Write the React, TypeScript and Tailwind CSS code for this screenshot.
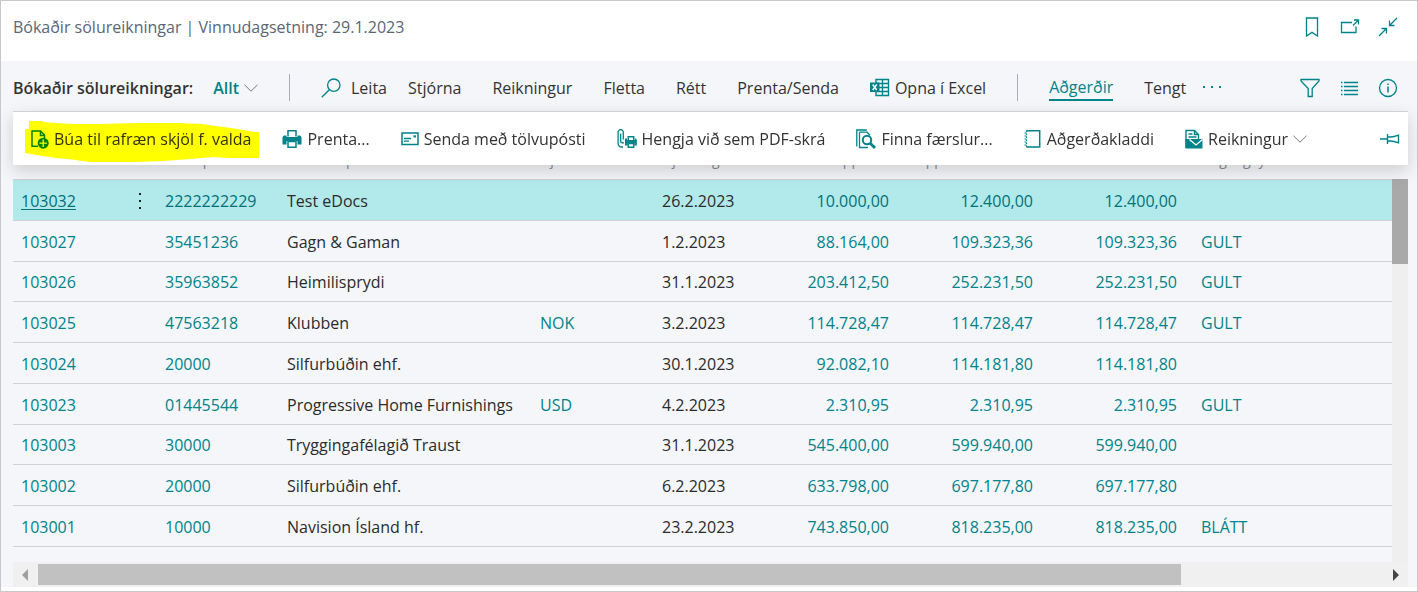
import type { ReactNode } from "react";

const teal = "#00838a";

function Svg({ w = 20, h = 20, children }: { w?: number; h?: number; children: ReactNode }) {
  return (
    <svg
      width={w}
      height={h}
      viewBox={`0 0 ${w} ${h}`}
      fill="none"
      stroke={teal}
      strokeWidth="1.3"
      className="shrink-0"
      aria-hidden="true"
    >
      {children}
    </svg>
  );
}

const BookmarkIcon = () => (
  <Svg>
    <path d="M4.5 1h11v18l-5.5-3.6L4.5 19z" />
  </Svg>
);
const PopOutIcon = () => (
  <Svg>
    <path d="M12 5.5H1.5v10h14.5v-6M13 8.5l5.5-5.5M14 3h4.5v4.5" />
  </Svg>
);
const CollapseIcon = () => (
  <Svg>
    <path d="M19 1l-7.5 7.5M11.5 3.5v5h5M1 19l7.5-7.5M3.5 11.5h5v5" />
  </Svg>
);
const FilterIcon = () => (
  <Svg>
    <path d="M1 1.5h18v1.5l-6.8 7.5v8h-4v-8L1 3z" />
  </Svg>
);
const ListIcon = () => (
  <Svg>
    <path d="M5 4.5h14M5 8.5h14M5 12.5h14M5 16.5h14M2 4.5h1.500M2 8.5h1.5M2 12.5h1.5M2 16.5h1.5" />
  </Svg>
);
const InfoIcon = () => (
  <Svg>
    <circle cx="10" cy="10" r="8.5" />
    <path d="M10 8.5v6M10 5.5v1.5" strokeWidth="1.5" />
  </Svg>
);
const SearchIcon = () => (
  <Svg>
    <circle cx="12.8" cy="7.2" r="6.2" />
    <path d="M8.3 11.7L.8 19.2" />
  </Svg>
);
const ExcelIcon = () => (
  <Svg>
    <path d="M6 1.5h12.5v16H6zM6 5.5h12.5M6 9.5h12.5M6 13.5h12.5M12.5 1.5v16" strokeWidth="1.4" />
    <path d="M0 4.5h9.5v9.5H0z" fill={teal} stroke="none" />
    <path d="M2.7 6.5l4 5.5M6.7 6.5l-4 5.5" stroke="#fff" strokeWidth="1.4" />
  </Svg>
);
const NewDocIcon = () => (
  <Svg w={18}>
    <path d="M7 17.3H1V2h8.5l4 4v3.5M9.5 2v4.5h4" strokeWidth="1.5" />
    <circle cx="12.2" cy="14.2" r="5.5" fill={teal} stroke="none" />
    <path d="M12.2 10.5v7.4M8.5 14.2h7.4" stroke="#fff" strokeWidth="1.3" />
  </Svg>
);
const PrinterIcon = () => (
  <Svg>
    <path d="M6 7.5V1.8h8v5.7" strokeWidth="1.5" />
    <path d="M2 6.5h2.5v1.5h11V6.5H18l1.5 1.5v7.5h-4v-3.5h-11v3.5H.5V8z" fill={teal} stroke="none" />
    <path d="M6 12.5h8v5.7H6z" fill="#fff" strokeWidth="1.5" />
  </Svg>
);
const MailIcon = () => (
  <Svg w={18}>
    <path d="M1 4h16v11.5H1z" strokeWidth="1.5" />
    <path d="M3 9.5h7M3 12.2h5" />
    <path d="M12.5 6.3h2.5v2.200h-2.5z" fill={teal} stroke="none" />
  </Svg>
);
const AttachIcon = () => (
  <Svg>
    <path d="M6.3 10.5V3.2a2.6 2.6 0 0 0-5.2 0v11.3a3.5 3.5 0 0 0 3.5 3.5H6M3.7 4.5v7.5c0 2 1.8 1.8 3.3 1.8" />
    <path d="M11.3 11.5V7.7h5.4v3.8" strokeWidth="1.5" />
    <path d="M8 9.5h2v1.5h8V9.5h1l.8 1.5v5.5h-2.5V14h-6.6v2.5H8z" fill={teal} stroke="none" />
    <path d="M11.3 14.5h5.4v3.8h-5.4z" fill="#fff" strokeWidth="1.5" />
  </Svg>
);
const FindIcon = () => (
  <Svg>
    <path d="M.8 17.5V1h10M3.5 3.2h7.5l3 3M3.5 3.2v15.3H12" />
    <circle cx="11" cy="11" r="4.2" strokeWidth="2" />
    <path d="M14 14l5 5" strokeWidth="2.8" />
  </Svg>
);
const NotebookIcon = () => (
  <Svg w={18}>
    <path d="M2.5 1.8h13.2v16.2H2.5" strokeWidth="1.5" />
    <path d="M2.5 1.5v17" strokeWidth="1.3" strokeDasharray="1.5 1.5" />
    <path d="M.5 4h2M.5 7h2M.5 10h2M.5 13h2M.5 16h2" strokeWidth="1.2" />
  </Svg>
);
const InvoiceIcon = () => (
  <Svg w={18}>
    <path d="M1 19V1.5h8.5l4 4V10M9.5 1.5v4h4M3.5 5h4M3.5 8h8" strokeWidth="1.4" />
    <path d="M4.5 10h13v9.5h-13zM.5 10h4v9.5h-4z" fill={teal} stroke="none" />
    <path d="M4.5 10.5l6.500 5.5 6.5-5.5" stroke="#fff" strokeWidth="1.3" />
  </Svg>
);
const PinIcon = () => (
  <Svg>
    <path d="M0 10h7M7.5 5v10M7.5 7.7c4 1 6 .5 11-1.5v7.6c-5-2-7-2.5-11-1.5z" strokeWidth="1.4" />
  </Svg>
);
const Chevron = () => (
  <svg width="14" height="8" viewBox="0 0 14 8" fill="none" stroke="#777" className="shrink-0" aria-hidden="true">
    <path d="M.5 .8L7 7.2 13.5 .8" />
  </svg>
);

function Tool({ icon, children, chevron }: { icon?: ReactNode; children: ReactNode; chevron?: boolean }) {
  return (
    <button className="flex items-center gap-[5px] whitespace-nowrap">
      {icon}
      <span>{children}</span>
      {chevron && <Chevron />}
    </button>
  );
}

type Row = [string, string, string, string, string, string, string, string, string];
const rows: Row[] = [
  ["103032", "2222222229", "Test eDocs", "", "26.2.2023", "10.000,00", "12.400,00", "12.400,00", ""],
  ["103027", "35451236", "Gagn & Gaman", "", "1.2.2023", "88.164,00", "109.323,36", "109.323,36", "GULT"],
  ["103026", "35963852", "Heimilisprydi", "", "31.1.2023", "203.412,50", "252.231,50", "252.231,50", "GULT"],
  ["103025", "47563218", "Klubben", "NOK", "3.2.2023", "114.728,47", "114.728,47", "114.728,47", "GULT"],
  ["103024", "20000", "Silfurbúðin ehf.", "", "30.1.2023", "92.082,10", "114.181,80", "114.181,80", ""],
  ["103023", "01445544", "Progressive Home Furnishings", "USD", "4.2.2023", "2.310,95", "2.310,95", "2.310,95", "GULT"],
  ["103003", "30000", "Tryggingafélagið Traust", "", "31.1.2023", "545.400,00", "599.940,00", "599.940,00", ""],
  ["103002", "20000", "Silfurbúðin ehf.", "", "6.2.2023", "633.798,00", "697.177,80", "697.177,80", ""],
  ["103001", "10000", "Navision Ísland hf.", "", "23.2.2023", "743.850,00", "818.235,00", "818.235,00", "BLÁTT"],
];

export default function App() {
  return (
    <div className="border border-[#c8c8c8] bg-white pb-1 font-['Open_Sans',sans-serif] text-[16px] leading-6 text-[#333]">
      <header className="flex h-[60px] items-center justify-between pr-[19px] pb-2 pl-3 text-[#5b6675]">
        <h1>Bókaðir sölureikningar | Vinnudagsetning: 29.1.2023</h1>
        <div className="flex gap-[18px]">
          <button aria-label="Bókamerki"><BookmarkIcon /></button>
          <button aria-label="Opna í nýjum glugga"><PopOutIcon /></button>
          <button aria-label="Minnka"><CollapseIcon /></button>
        </div>
      </header>

      <main className="bg-[#f5f6f9] pr-[9px] pl-3">
        <nav className="flex h-[50px] items-center gap-[31px] pt-[3px]">
          <div className="flex items-center gap-5 font-semibold whitespace-nowrap">
            <h2>Bókaðir sölureikningar:</h2>
            <button className="flex items-center gap-[5px] text-[#00838a]">
              Allt <Chevron />
            </button>
          </div>
          <span className="h-[27px] w-px shrink-0 bg-[#a9adb3]" />
          <button className="-mr-[10px] flex items-center gap-[10px]">
            <SearchIcon />
            Leita
          </button>
          <Tool>Stjórna</Tool>
          <Tool>Reikningur</Tool>
          <Tool>Fletta</Tool>
          <Tool>Rétt</Tool>
          <Tool>Prenta/Senda</Tool>
          <Tool icon={<ExcelIcon />}>Opna í Excel</Tool>
          <span className="h-[27px] w-px shrink-0 bg-[#a9adb3]" />
          <button className="border-b-2 border-[#00838a] text-[#00838a]">Aðgerðir</button>
          <div className="flex items-center gap-4">
            <Tool>Tengt</Tool>
            <button aria-label="Fleiri valkostir">
              <Svg>
                <path d="M1 9h2M9 9h2M17 9h2" strokeWidth="2" />
              </Svg>
            </button>
          </div>
          <div className="ml-auto flex gap-[19px] pr-[10px]">
            <button aria-label="Sía"><FilterIcon /></button>
            <button aria-label="Listi"><ListIcon /></button>
            <button aria-label="Upplýsingar"><InfoIcon /></button>
          </div>
        </nav>

        <div className="relative z-10 flex h-[54px] items-center gap-[31px] border-t border-[#cfd1d4] bg-white pr-2 pl-[18px] shadow-[0_6px_16px_rgba(0,0,0,0.16)]">
          <div className="relative">
            <Tool icon={<NewDocIcon />}>Búa til rafræn skjöl f. valda</Tool>
            <svg
              className="pointer-events-none absolute -top-[6px] -left-[6px] mix-blend-multiply"
              width="234"
              height="42"
              viewBox="0 0 234 42"
              aria-hidden="true"
            >
              <path
                d="M4 0h14v1l12 1 18 1h28l37-1h40l24 1 14 2 15 2 12 2 12 2h14v26h-40l-16-1-22 2-28 2-27 1H65l-22-3-12-1-20-3-11-2V8h4z"
                fill="#ffff00"
              />
            </svg>
          </div>
          <Tool icon={<PrinterIcon />}>Prenta...</Tool>
          <Tool icon={<MailIcon />}>Senda með tölvupósti</Tool>
          <Tool icon={<AttachIcon />}>Hengja við sem PDF-skrá</Tool>
          <Tool icon={<FindIcon />}>Finna færslur...</Tool>
          <Tool icon={<NotebookIcon />}>Aðgerðakladdi</Tool>
          <Tool icon={<InvoiceIcon />} chevron>Reikningur</Tool>
          <button className="ml-auto" aria-label="Festa"><PinIcon /></button>
        </div>

        <div className="-mt-4 flex">
          <div className="min-w-0 flex-1 overflow-hidden pb-[15px]">
            <table className="h-[398px] w-full table-fixed border-separate border-spacing-0 text-left whitespace-nowrap">
              <colgroup>
                <col className="w-[110px]" />
                <col className="w-[34px]" />
                <col className="w-[122px]" />
                <col className="w-[253px]" />
                <col className="w-[122px]" />
                <col className="w-[107px]" />
                <col className="w-[144px]" />
                <col className="w-[144px]" />
                <col className="w-[144px]" />
                <col />
              </colgroup>
              <thead className="text-[14px] leading-4 text-[#8a8d92]">
                <tr className="h-[31px] [&>th]:border-b [&>th]:border-[#cfd1d6] [&>th]:pb-2 [&>th]:pl-2 [&>th]:font-normal">
                  <th>Nr.</th>
                  <th />
                  <th>Viðskiptam.nr.</th>
                  <th>Nafn kaupanda</th>
                  <th>Gjaldmiðill</th>
                  <th>Gjalddagi</th>
                  <th className="pr-4 text-right">Upphæð</th>
                  <th className="pr-4 text-right">Upphæð með VSK</th>
                  <th className="pr-4 text-right">Eftirstöðvar</th>
                  <th>Birgðageymsla</th>
                </tr>
              </thead>
              <tbody>
                {rows.map((r, i) => (
                  <tr
                    key={r[0]}
                    className={
                      "[&>td]:border-b [&>td]:border-[#cfd1d6] [&>td]:pt-0.5 [&>td]:pl-2 " +
                      (i === 0 ? "bg-[#b2e9eb] text-[#007178]" : "text-[#00838a]")
                    }
                  >
                    <td>
                      <a href="#" className={i === 0 ? "underline underline-offset-2" : ""}>{r[0]}</a>
                    </td>
                    <td>
                      {i === 0 && (
                        <button className="block w-4" aria-label="Fleiri valkostir">
                          <svg width="16" height="20" viewBox="0 0 16 20" fill="#222" aria-hidden="true">
                            <path d="M8 2h2v2H8zM8 9h2v2H8zM8 16h2v2H8z" />
                          </svg>
                        </button>
                      )}
                    </td>
                    <td><a href="#">{r[1]}</a></td>
                    <td className="text-[#2b2b2b]">{r[2]}</td>
                    <td><a href="#">{r[3]}</a></td>
                    <td className="text-[#2b2b2b]">{r[4]}</td>
                    <td className="text-right"><a href="#" className="pr-4">{r[5]}</a></td>
                    <td className="text-right"><a href="#" className="pr-4">{r[6]}</a></td>
                    <td className="text-right"><a href="#" className="pr-4">{r[7]}</a></td>
                    <td><a href="#">{r[8]}</a></td>
                  </tr>
                ))}
              </tbody>
            </table>
          </div>
          <div className="mt-[30px] w-4 bg-[#efefef]">
            <div className="h-[85px] bg-[#a9a9a9]" />
          </div>
        </div>

        <div className="flex h-[25px] items-center bg-[#f0f0f0]">
          <svg width="25" height="12" viewBox="0 0 25 12" fill="#a0a0a0" aria-hidden="true">
            <path d="M15 0v12L9 6z" />
          </svg>
          <div className="flex-1">
            <div className="h-[21px] w-[85%] bg-[#c1c1c1]" />
          </div>
          <svg width="25" height="12" viewBox="0 0 25 12" fill="#444" aria-hidden="true">
            <path d="M10 0v12l6-6z" />
          </svg>
        </div>
      </main>
    </div>
  );
}
